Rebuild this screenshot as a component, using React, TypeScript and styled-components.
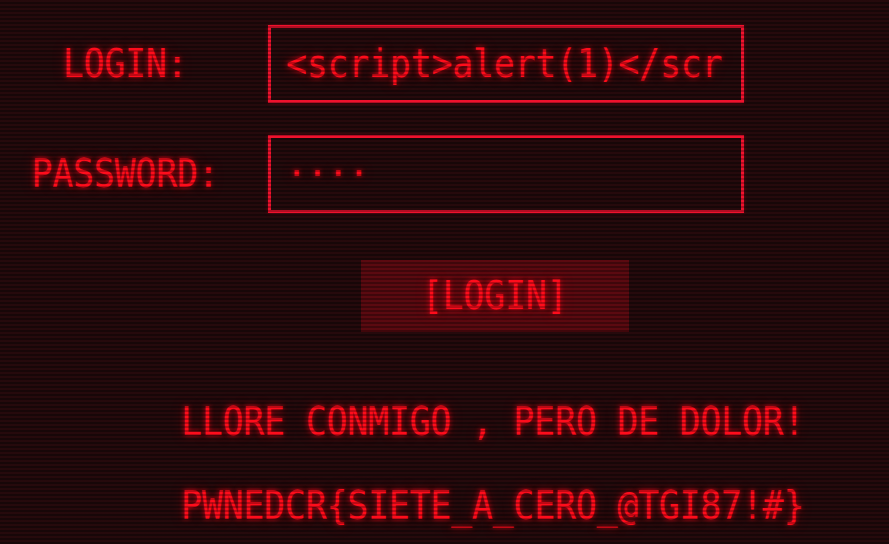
import React from "react";
import styled, { createGlobalStyle } from "styled-components";

const Global = createGlobalStyle`
  html, body {
    margin: 0;
    padding: 0;
    background: #1f0a0c;
  }
  body {
    min-height: 544px;
    font-family: "DejaVu Sans Mono", "Liberation Mono", monospace;
  }
  body::after {
    content: "";
    position: fixed;
    inset: 0;
    pointer-events: none;
    background: repeating-linear-gradient(
      to bottom,
      rgba(255, 20, 30, 0.03) 0px,
      rgba(255, 20, 30, 0.03) 2px,
      rgba(0, 0, 0, 0.26) 2px,
      rgba(0, 0, 0, 0.26) 4px
    );
  }
`;

const Screen = styled.main`
  width: 889px;
  height: 544px;
  overflow: hidden;
  box-sizing: border-box;
  padding-top: 25px;
  display: flex;
  flex-direction: column;
`;

const Form = styled.div`
  display: grid;
  grid-template-columns: 250px 476px;
  column-gap: 18px;
  row-gap: 32px;
`;

const glow = `
  color: #ff0d1c;
  text-shadow: 0 0 5px rgba(255, 0, 20, 0.75), 0 0 12px rgba(255, 0, 20, 0.35);
  font-family: "DejaVu Sans Mono", "Liberation Mono", monospace;
  font-size: 35px;
  letter-spacing: -0.3px;
`;

const Glyphs = styled.span`
  display: inline-block;
  transform: scaleY(1.12);
  white-space: nowrap;
`;

const Label = styled.label`
  ${glow}
  display: flex;
  align-items: center;
  justify-content: center;
  height: 78px;
`;

const Field = styled.div`
  ${glow}
  box-sizing: border-box;
  height: 78px;
  border: 3px solid #f0122e;
  padding: 0 18px 0 15px;
  display: flex;
  align-items: center;
  overflow: hidden;
  box-shadow: 0 0 4px rgba(255, 0, 30, 0.35);
`;

const Lower = styled.section`
  margin-left: 181px;
  width: 627px;
  display: flex;
  flex-direction: column;
  align-items: center;
  margin-top: 47px;
`;

const Button = styled.button`
  ${glow}
  width: 268px;
  height: 72px;
  border: none;
  background: #560a10;
  cursor: pointer;
  padding: 0;
`;

const Message = styled.p<{ $gap: number }>`
  ${glow}
  align-self: stretch;
  margin: ${(p) => p.$gap}px 0 0;
  line-height: 40px;
`;

export default function App() {
  return (
    <>
      <Global />
      <Screen>
        <Form>
          <Label>
            <Glyphs>LOGIN:</Glyphs>
          </Label>
          <Field>
            <Glyphs>&lt;script&gt;alert(1)&lt;/scr</Glyphs>
          </Field>
          <Label>
            <Glyphs>PASSWORD:</Glyphs>
          </Label>
          <Field>
            <Glyphs>····</Glyphs>
          </Field>
        </Form>
        <Lower>
          <Button>
            <Glyphs>[LOGIN]</Glyphs>
          </Button>
          <Message $gap={70}>
            <Glyphs>LLORE CONMIGO , PERO DE DOLOR!</Glyphs>
          </Message>
          <Message $gap={44}>
            <Glyphs>PWNEDCR{"{"}SIETE_A_CERO_@TGI87!#{"}"}</Glyphs>
          </Message>
        </Lower>
      </Screen>
    </>
  );
}
